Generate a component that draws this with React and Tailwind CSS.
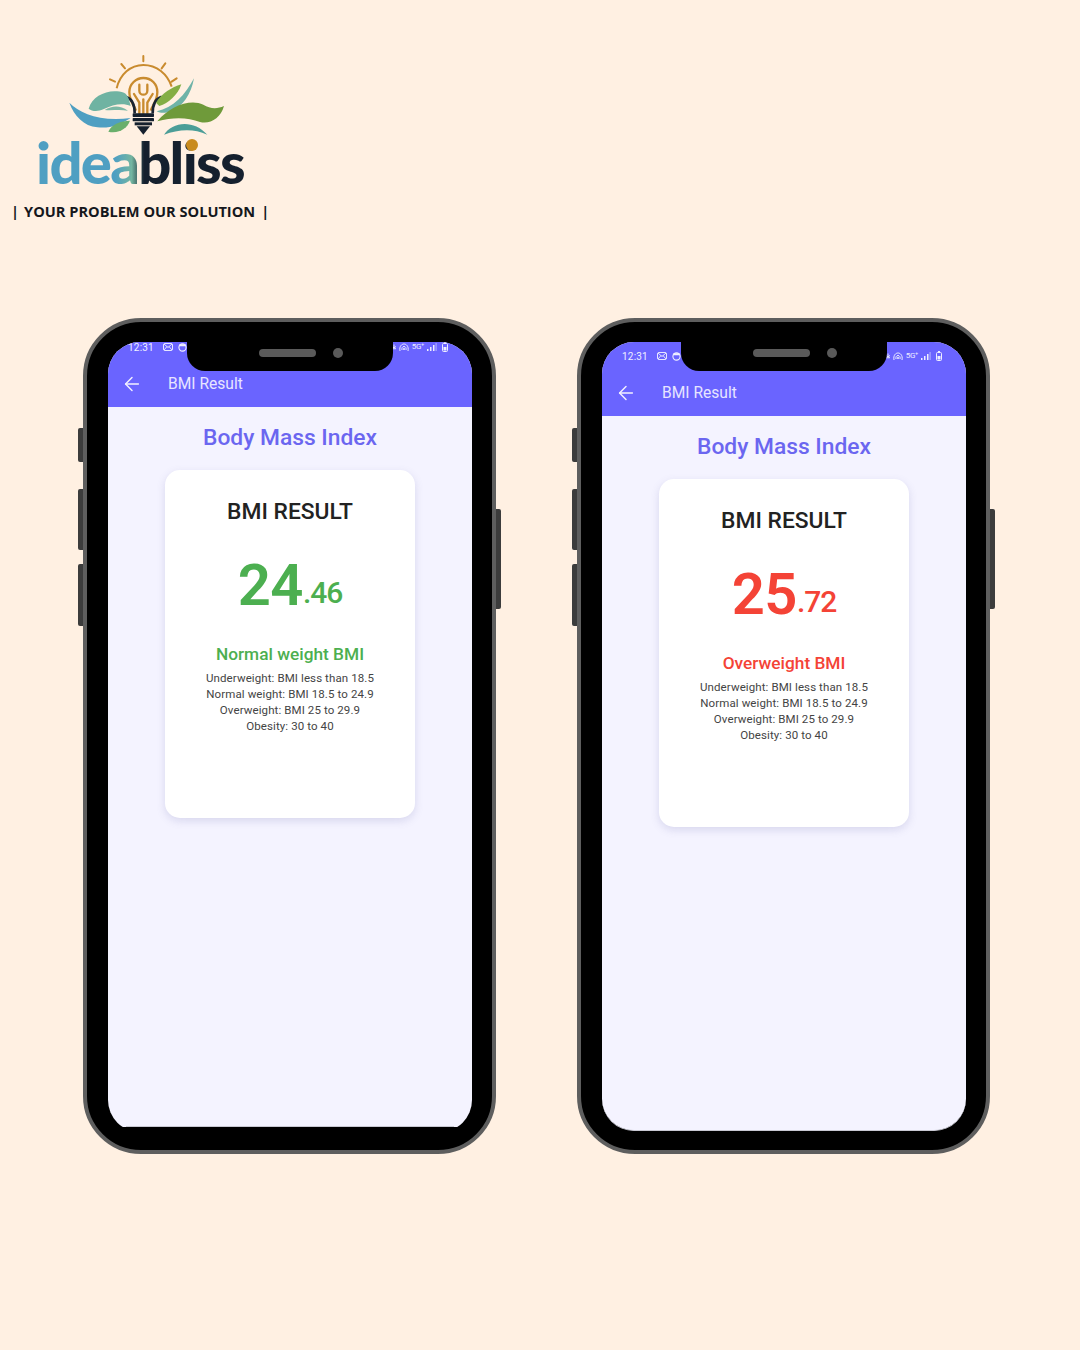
import React from "react";
import { ArrowLeft } from "lucide-react";

const roboto = { fontFamily: "Roboto, sans-serif" };

function Logo() {
  return (
    <svg width="170" height="90" viewBox="0 0 510 270" className="block">
      <path d="M170 115 C180 72 212 45 250 45 C290 45 322 72 335 110" fill="none" stroke="#c98b2e" strokeWidth="6" />
      <g stroke="#c98b2e" strokeWidth="6" strokeLinecap="round">
        <path d="M250 18V34M184 42L195 55M316 40L305 55M150 88L165 95M350 85L335 95" />
      </g>
      <path d="M228 182 C222 165 208 152 208 126 C208 102 228 84 250 84 C274 84 292 102 292 126 C292 152 278 165 272 182" fill="none" stroke="#c98b2e" strokeWidth="7" />
      <path d="M250 190V148M238 190V158L222 132M262 190V158L278 132M238 104V122C238 138 262 138 262 122V104" fill="none" stroke="#c98b2e" strokeWidth="7" strokeLinecap="round" />
      <path d="M197 140 C218 146 224 165 224 190M305 140 C284 146 278 165 278 190" fill="none" stroke="#1b2433" strokeWidth="8" />
      <rect x="218" y="190" width="64" height="11" rx="2" fill="#15202e" />
      <rect x="218" y="204" width="64" height="10" rx="2" fill="#15202e" />
      <rect x="224" y="217" width="52" height="9" fill="#15202e" />
      <path d="M230 229H270L250 254Z" fill="#15202e" />
      <path d="M86 176 C98 134 150 114 192 128 C206 136 208 152 212 168 C190 158 160 162 130 178 C112 186 96 184 86 176Z" fill="#6fb3a2" />
      <path d="M134 180 C155 168 178 164 204 182 C180 178 155 182 134 180Z" fill="#7cb8a5" />
      <path d="M28 158 C60 190 120 216 212 204 C176 226 150 236 112 232 C72 228 42 198 28 158Z" fill="#4f9fc2" />
      <path d="M145 245 C155 222 182 212 210 212 C202 234 178 252 145 245Z" fill="#6aaf6c" />
      <path d="M288 158 C305 130 335 112 364 103 C354 135 325 160 298 168Z" fill="#84ae45" />
      <path d="M290 184 C340 174 375 135 402 85 C394 132 367 172 332 184 C316 190 302 190 290 184Z" fill="#6fb3a8" />
      <path d="M292 214 C330 168 390 146 430 164 C450 176 470 178 492 168 C482 204 450 224 420 216 C385 202 340 200 292 214Z" fill="#6f9a3a" />
      <path d="M312 254 C335 216 400 206 442 254 C400 234 355 238 312 254Z" fill="#4c9e98" />
    </svg>
  );
}

function StatusIcons() {
  return (
    <div className="flex items-center gap-[3px] text-[8px] text-[#eeeeff]">
      <svg width="4" height="9" viewBox="0 0 4 9" fill="none" stroke="#e6e6ff" strokeWidth="1">
        <path d="M2 6.500V1.500M0 3.500L4 6M4 3.500L0 6" />
      </svg>
      <svg width="10" height="9" viewBox="0 0 10 9" fill="none" stroke="#eeeeff" strokeWidth="1">
        <path d="M1 8 C0 3 3 1 5 1 C7 1 10 3 9 8M3 7 C2.500 5 3.500 3.500 5 3.500 C6.500 3.500 7.500 5 7 7" />
        <circle cx="5" cy="6" r="1" fill="#eeeeff" stroke="none" />
      </svg>
      <span className="tracking-[-0.3px]">5G⁺</span>
      <svg width="10" height="9" viewBox="0 0 10 9" fill="#eeeeff">
        <rect x="0" y="6" width="1.500" height="2" />
        <rect x="3" y="4" width="1.500" height="4" />
        <rect x="6" y="2" width="1.500" height="6" />
        <rect x="8.500" y="0" width="1.200" height="8" opacity="0.5" />
      </svg>
      <svg width="6" height="10" viewBox="0 0 6 10" className="ml-[2px]" fill="none" stroke="#eeeeff">
        <rect x="0.500" y="1.500" width="5" height="8" rx="1" />
        <rect x="2" y="0" width="2" height="1.500" fill="#eeeeff" stroke="none" />
        <rect x="1.500" y="5" width="3" height="3.500" fill="#eeeeff" stroke="none" />
      </svg>
    </div>
  );
}

function Phone({ whole, fraction, label, colorClass, statusClass, screenClass, innerClass, bottomLine }) {
  return (
    <div className="relative w-[413px] h-[836px] shrink-0 rounded-[58px] border-[4px] border-[#5e5e5e] bg-black pl-[21px] pr-[20px] pt-[20px]">
      <div className="absolute left-[-9px] top-[106px] w-[5px] h-[34px] rounded-l-[2px] bg-[#3c3c3c]" />
      <div className="absolute left-[-9px] top-[167px] w-[5px] h-[61px] rounded-l-[2px] bg-[#3c3c3c]" />
      <div className="absolute left-[-9px] top-[242px] w-[5px] h-[62px] rounded-l-[2px] bg-[#3c3c3c]" />
      <div className="absolute right-[-9px] top-[187px] w-[5px] h-[100px] rounded-r-[2px] bg-[#3c3c3c]" />

      <div className={screenClass}>
        <div className={innerClass} style={roboto}>
          <div className="absolute left-[79px] top-0 w-[206px] h-[29px] rounded-b-[18px] bg-black z-10">
            <div className="absolute left-[72px] top-[7px] w-[57px] h-[8px] rounded-full bg-[#5a5a5a]" />
            <div className="absolute left-[146px] top-[6px] w-[10px] h-[10px] rounded-full bg-[#5a5a5a]" />
          </div>

          <div className={statusClass}>
            <div className="flex h-[10px] items-center justify-between pl-[20px] pr-[24px]">
              <div className="flex items-center gap-[9px] text-[10px] text-[#f0f0ff]">
                <span className="tracking-[0.2px]">12:31</span>
                <div className="flex items-center gap-[5px]">
                  <svg width="10" height="8" viewBox="0 0 10 8" fill="none" stroke="#e6e6ff" strokeWidth="1">
                    <rect x="0.500" y="0.500" width="9" height="7" rx="1.500" />
                    <path d="M1 1L5 4.500L9 1M1 7L4 3.500M9 7L6 3.500" />
                  </svg>
                  <svg width="9" height="9" viewBox="0 0 10 10" fill="none" stroke="#f0f0ff" strokeWidth="1.2">
                    <circle cx="5" cy="5" r="4" />
                    <path d="M1.500 3.500H8.500V1.500H1.500Z" fill="#f0f0ff" stroke="none" />
                  </svg>
                </div>
              </div>
              <StatusIcons />
            </div>
            <div className="mt-[20px] flex h-[24px] items-center pl-[13px]">
              <ArrowLeft size={22} strokeWidth={1.6} color="#f2f0ff" />
              <span className="ml-[25px] text-[15.6px] leading-[24px] text-[#e7e5ff]">BMI Result</span>
            </div>
          </div>

          <h1 className="mt-[17px] text-center text-[22.8px] font-medium leading-[28px] text-[#6b66f0]">Body Mass Index</h1>

          <div className="mx-auto mt-[18px] h-[348px] w-[250px] rounded-[15px] bg-white pt-[28px] text-center shadow-[0_3px_8px_rgba(90,90,160,0.18)]">
            <h2 className="text-[22.8px] font-medium leading-[28px] text-[#222222]">BMI RESULT</h2>
            <p className={`mt-[29px] leading-[60px] ${colorClass}`}>
              <span className="text-[58px] font-semibold tracking-[-0.5px]">{whole}</span>
              <span className="align-[2px] text-[30px] font-medium tracking-[-1px]">.{fraction}</span>
            </p>
            <p className={`mt-[12px] text-[17.3px] font-medium leading-[24px] ${colorClass}`}>{label}</p>
            <div className="mt-[4px] text-[11.5px] leading-[16px] tracking-[0.1px] text-[#444444]">
              <p>Underweight: BMI less than 18.5</p>
              <p>Normal weight: BMI 18.5 to 24.9</p>
              <p>Overweight: BMI 25 to 29.9</p>
              <p>Obesity: 30 to 40</p>
            </div>
          </div>
          {bottomLine && <div className="absolute left-[18px] right-[18px] top-[784px] h-px bg-[#c8c8d2]" />}
        </div>
      </div>
    </div>
  );
}

export default function App() {
  return (
    <div className="h-[1350px] w-[1080px] overflow-hidden bg-[#fff0e2]">
      <header className="h-[318px] pl-[13px] pt-[50px]">
        <div className="ml-[47px]">
          <Logo />
        </div>
        <div
          className="relative ml-[23px] mt-[-12px] w-fit bg-gradient-to-r from-[#4f9fc2] from-38% via-[#74b5a0] via-46% to-[#15202e] to-52% bg-clip-text text-[58px] font-black leading-[68px] tracking-[-1.700px] text-transparent"
          style={{ fontFamily: "Lato, sans-serif" }}
        >
          ideabliss
          <div className="absolute left-[150px] top-[11px] h-[12px] w-[12px] rounded-full bg-[#c98b1e]" />
        </div>
        <p
          className="ml-[-2px] mt-[5px] flex text-[14.6px] font-bold leading-[20px] text-[#15171c]"
          style={{ fontFamily: "'Open Sans', sans-serif" }}
        >
          <span>|</span>
          <span className="ml-[5px] whitespace-nowrap">YOUR PROBLEM OUR SOLUTION</span>
          <span className="ml-[6px]">|</span>
        </p>
      </header>

      <main className="flex gap-[81px] pl-[83px]">
        <Phone
          whole="24"
          fraction="46"
          label="Normal weight BMI"
          colorClass="text-[#4caf50]"
          statusClass="h-[65px] bg-[#6a64ff]"
          screenClass="h-[785px] w-[364px] overflow-hidden"
          innerClass="relative h-[790px] rounded-[32px] overflow-hidden bg-[#f4f3ff]"
          bottomLine
        />
        <Phone
          whole="25"
          fraction="72"
          label="Overweight BMI"
          colorClass="text-[#f44336]"
          statusClass="h-[74px] bg-[#6a64ff] pt-[9px]"
          screenClass="h-[789px] w-[364px]"
          innerClass="relative h-[789px] rounded-[32px] overflow-hidden border-b border-[#c8c8d2] bg-[#f4f3ff]"
        />
      </main>
    </div>
  );
}
